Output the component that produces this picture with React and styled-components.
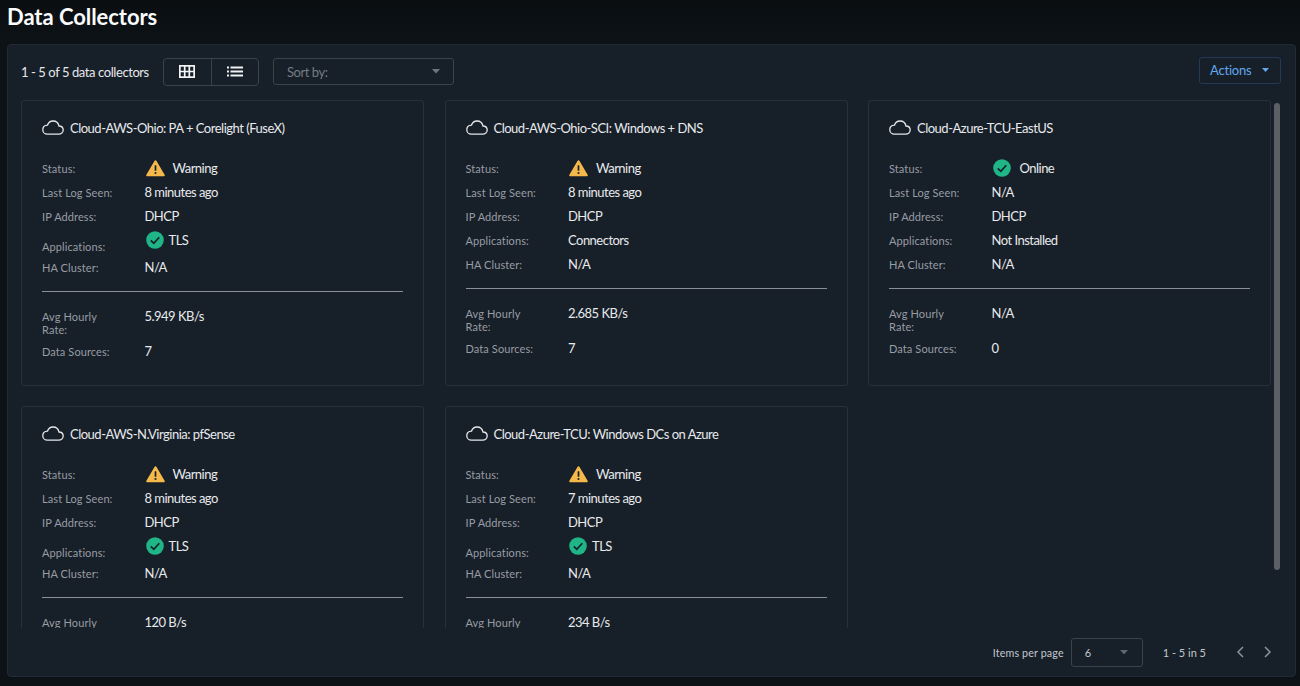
import React from "react";
import styled, { createGlobalStyle } from "styled-components";

const collectors = [
  { name: "Cloud-AWS-Ohio: PA + Corelight (FuseX)", status: "Warning", seen: "8 minutes ago", app: "TLS", rate: "5.949 KB/s", sources: "7" },
  { name: "Cloud-AWS-Ohio-SCI: Windows + DNS", status: "Warning", seen: "8 minutes ago", app: "Connectors", rate: "2.685 KB/s", sources: "7" },
  { name: "Cloud-Azure-TCU-EastUS", status: "Online", seen: "N/A", app: "Not Installed", rate: "N/A", sources: "0" },
  { name: "Cloud-AWS-N.Virginia: pfSense", status: "Warning", seen: "8 minutes ago", app: "TLS", rate: "120 B/s", sources: "7" },
  { name: "Cloud-Azure-TCU: Windows DCs on Azure", status: "Warning", seen: "7 minutes ago", app: "TLS", rate: "234 B/s", sources: "7" },
];

const CloudIcon = () => (
  <svg width="22" height="15" viewBox="0 0 22 15" fill="none" stroke="#e6e8ea" strokeWidth="1.3">
    <path d="M5.4 14.2h11.2c2.6 0 4.6-1.8 4.6-4.1 0-2.2-1.8-4-4.2-4.1C16.3 3 13.9 1 11.1 1 8.4 1 6.200 2.700 5.500 5.200 2.800 5.400.8 7.300.8 9.700c0 2.500 2 4.500 4.600 4.500z" />
  </svg>
);

const WarningIcon = () => (
  <svg width="19" height="18" viewBox="0 0 20 18">
    <path d="M10 .8c.5 0 .9.300 1.100.700l8.500 14.600c.5.800-.1 1.700-1 1.700H1.400c-.9 0-1.500-.9-1-1.700L8.900 1.500C9.100 1.100 9.500.8 10 .8z" fill="#f5b84a" />
    <rect x="9.100" y="6" width="1.800" height="6" rx=".6" fill="#17202a" />
    <circle cx="10" cy="14.300" r="1.100" fill="#17202a" />
  </svg>
);

const CheckIcon = () => (
  <svg width="18" height="18" viewBox="0 0 18 18">
    <circle cx="9" cy="9" r="8.800" fill="#1fb586" />
    <path d="M4.800 9.300l3 3 5.500-6" fill="none" stroke="#17202a" strokeWidth="1.700" />
  </svg>
);

const Caret = ({ color, size = 9 }) => (
  <svg width={size} height={size * 0.56} viewBox="0 0 9 5">
    <path d="M0 0h9L4.500 5z" fill={color} />
  </svg>
);

const GridIcon = () => (
  <svg width="16" height="13" viewBox="0 0 16 13" fill="none" stroke="#f4f5f6" strokeWidth="1.700">
    <rect x=".85" y=".85" width="14.300" height="11.300" />
    <path d="M5.700 .85v11.300M10.300 .85v11.300M.85 6.500h14.300" />
  </svg>
);

const ListIcon = () => (
  <svg width="16" height="11" viewBox="0 0 16 11" fill="#f0f1f2">
    <rect x="0" y=".5" width="2" height="2" />
    <rect x="0" y="4.500" width="2" height="2" />
    <rect x="0" y="8.500" width="2" height="2" />
    <rect x="3.500" y=".5" width="12.500" height="2" />
    <rect x="3.500" y="4.500" width="12.500" height="2" />
    <rect x="3.500" y="8.500" width="12.500" height="2" />
  </svg>
);

const Chevron = ({ dir }) => (
  <svg width="8" height="12" viewBox="0 0 8 12" fill="none" stroke="#8b9299" strokeWidth="1.500">
    <path d={dir === "left" ? "M7 1L2 6l5 5" : "M1 1l5 5-5 5"} />
  </svg>
);

export default function App() {
  return (
    <>
      <GlobalStyle />
      <Page>
        <Title>Data Collectors</Title>
        <Panel>
          <Toolbar>
            <Count>1 - 5 of 5 data collectors</Count>
            <Toggle>
              <ToggleItem><GridIcon /></ToggleItem>
              <ToggleItem><ListIcon /></ToggleItem>
            </Toggle>
            <SortSelect>
              Sort by:
              <Caret color="#6f767d" size={8} />
            </SortSelect>
            <ActionsButton>
              Actions
              <Caret color="#62a8ee" size={7} />
            </ActionsButton>
          </Toolbar>
          <ScrollArea>
            <CardGrid>
              {collectors.map((c) => {
                const hasCheck = c.app === "TLS";
                return (
                  <Card key={c.name}>
                    <CardTitle>
                      <CloudIcon />
                      {c.name}
                    </CardTitle>
                    <Rows>
                      <Row>
                        <Label>Status:</Label>
                        <Value>
                          <StatusIcon>{c.status === "Online" ? <CheckIcon /> : <WarningIcon />}</StatusIcon>
                          {c.status}
                        </Value>
                      </Row>
                      <Row>
                        <Label>Last Log Seen:</Label>
                        <Value>{c.seen}</Value>
                      </Row>
                      <Row>
                        <Label>IP Address:</Label>
                        <Value>DHCP</Value>
                      </Row>
                      <Row $tall={hasCheck}>
                        <Label $low={hasCheck}>Applications:</Label>
                        <Value $high={hasCheck}>
                          {hasCheck && <AppIcon><CheckIcon /></AppIcon>}
                          {c.app}
                        </Value>
                      </Row>
                      <Row>
                        <Label>HA Cluster:</Label>
                        <Value>N/A</Value>
                      </Row>
                    </Rows>
                    <Divider />
                    <RateRow>
                      <Label>Avg Hourly Rate:</Label>
                      <Value>{c.rate}</Value>
                    </RateRow>
                    <Row>
                      <Label>Data Sources:</Label>
                      <Value>{c.sources}</Value>
                    </Row>
                  </Card>
                );
              })}
            </CardGrid>
          </ScrollArea>
          <ScrollThumb />
          <Footer>
            <FooterLabel>Items per page</FooterLabel>
            <PageSelect>
              6
              <Caret color="#5f666d" size={8} />
            </PageSelect>
            <PageRange>1 - 5 in 5</PageRange>
            <PageNav>
              <Chevron dir="left" />
              <Chevron dir="right" />
            </PageNav>
          </Footer>
        </Panel>
      </Page>
    </>
  );
}

const GlobalStyle = createGlobalStyle`
  html, body {
    margin: 0;
    height: 100%;
    overflow: hidden;
    background: #0c1115;
  }
  * { box-sizing: border-box; }
  body {
    font-family: Lato, "Liberation Sans", sans-serif;
  }
`;

const Page = styled.div`
  height: 686px;
  padding: 0 4px 9px 7px;
  display: flex;
  flex-direction: column;
  background: linear-gradient(#0a0e11, #0d1216 40px);
`;
const Title = styled.h1`
  margin: 0;
  height: 44px;
  padding-top: 3px;
  font-size: 22px;
  line-height: 28px;
  letter-spacing: -0.05px;
  font-weight: 700;
  color: #fbfbfc;
`;
const Panel = styled.div`
  position: relative;
  flex: 1;
  min-height: 0;
  display: flex;
  flex-direction: column;
  padding: 12px 14px 0 13px;
  background: #171f29;
  border: 1px solid #222b35;
  border-radius: 4px;
`;
const Toolbar = styled.div`
  display: flex;
  align-items: center;
  height: 29px;
  margin-bottom: 14px;
`;
const Count = styled.div`
  width: 142px;
  font-size: 13px;
  letter-spacing: -0.42px;
  color: #e6e8ea;
  white-space: nowrap;
`;
const Toggle = styled.div`
  display: flex;
  width: 96px;
  height: 28px;
  border: 1px solid #3a434d;
  border-radius: 4px;
`;
const ToggleItem = styled.div`
  flex: 1;
  display: flex;
  align-items: center;
  justify-content: center;
  & + & {
    border-left: 1px solid #3a434d;
  }
`;
const SortSelect = styled.div`
  width: 181px;
  height: 27px;
  margin-left: 14px;
  padding: 0 13px;
  display: flex;
  align-items: center;
  justify-content: space-between;
  font-size: 13px;
  letter-spacing: -0.45px;
  color: #757c83;
  border: 1px solid #3a434d;
  border-radius: 3px;
`;
const ActionsButton = styled.div`
  margin-left: auto;
  margin-top: -3px;
  width: 82px;
  height: 27px;
  padding: 0 11px 0 10px;
  display: flex;
  align-items: center;
  justify-content: space-between;
  font-size: 13px;
  letter-spacing: -0.2px;
  color: #62a8ee;
  border: 1px solid #213a55;
  border-radius: 3px;
`;
const ScrollArea = styled.div`
  height: 528px;
  overflow: hidden;
  flex: none;
`;
const CardGrid = styled.div`
  display: grid;
  grid-template-columns: repeat(3, 403px);
  column-gap: 20.500px;
  row-gap: 20px;
`;
const Card = styled.div`
  height: 286px;
  padding: 19px 20px 0 20px;
  background: #171f29;
  border: 1px solid #27303b;
  border-radius: 3px;
  &:nth-child(n + 4) {
    height: 300px;
  }
`;
const CardTitle = styled.div`
  display: flex;
  align-items: center;
  gap: 6px;
  height: 15px;
  margin-bottom: 22px;
  font-size: 13px;
  letter-spacing: -0.5px;
  color: #e8eaec;
  white-space: nowrap;
`;
const Rows = styled.div`
  display: flex;
  flex-direction: column;
`;
const Row = styled.div`
  display: grid;
  grid-template-columns: 102.500px 1fr;
  align-items: center;
  height: ${(p) => (p.$tall ? "27px" : "24px")};
`;
const Label = styled.div`
  padding-bottom: 2px;
  font-size: 11px;
  line-height: 13px;
  letter-spacing: 0.1px;
  color: #979da3;
  transform: ${(p) => (p.$low ? "translateY(5px)" : "none")};
`;
const Value = styled.div`
  display: flex;
  align-items: center;
  padding-bottom: 2px;
  font-size: 13px;
  letter-spacing: -0.52px;
  color: #e8eaec;
  white-space: nowrap;
  transform: ${(p) => (p.$high ? "translateY(-2px)" : "none")};
`;
const StatusIcon = styled.span`
  display: flex;
  width: 27px;
  margin-left: 1px;
`;
const AppIcon = styled.span`
  display: flex;
  width: 23px;
  margin-left: 1px;
`;
const Divider = styled.div`
  height: 1px;
  margin: 11px 0 17px;
  background: #8a9096;
`;
const RateRow = styled.div`
  display: grid;
  grid-template-columns: 102.500px 1fr;
  align-items: start;
  height: 31px;
  & > div:first-child {
    width: 60px;
    margin-top: 1px;
  }
  & > div:last-child {
    margin-top: -1px;
  }
`;
const ScrollThumb = styled.div`
  position: absolute;
  top: 58px;
  right: 15px;
  width: 6px;
  height: 467px;
  border-radius: 3px;
  background: #5c6064;
`;
const Footer = styled.div`
  flex: 1;
  display: flex;
  align-items: center;
  justify-content: flex-end;
  padding: 0 9px 0 0;
`;
const FooterLabel = styled.div`
  font-size: 10.700px;
  letter-spacing: 0.15px;
  color: #c3c7cb;
`;
const PageSelect = styled.div`
  width: 72px;
  height: 29px;
  margin-left: 7px;
  padding: 0 14px 0 13px;
  display: flex;
  align-items: center;
  justify-content: space-between;
  font-size: 11px;
  color: #c3c7cb;
  border: 1px solid #3a434d;
  border-radius: 3px;
`;
const PageRange = styled.div`
  margin-left: 20px;
  font-size: 11px;
  color: #c3c7cb;
`;
const PageNav = styled.div`
  display: flex;
  align-items: center;
  gap: 20px;
  margin-left: 30px;
`;
